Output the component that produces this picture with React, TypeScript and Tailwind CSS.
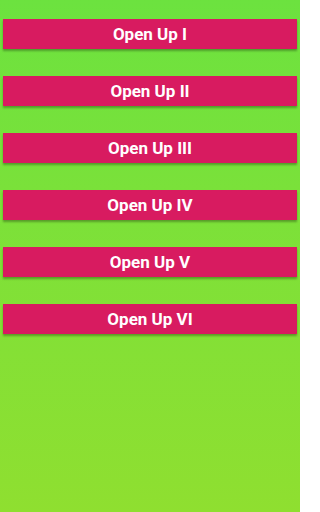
import React from "react";

const labels = ["I", "II", "III", "IV", "V", "VI"];

export default function App() {
  return (
    <div
      className="w-[300px] h-[512px] bg-gradient-to-b from-[#6ce23f] to-[#8fdf30] flex flex-col gap-[27px] pt-[19px] px-[3px]"
      style={{ fontFamily: "Roboto, 'Liberation Sans', sans-serif" }}
    >
      {labels.map((n) => (
        <button
          key={n}
          className="h-[30px] w-full bg-[#d81b60] text-white text-[17px] font-bold flex items-center justify-center pt-[1px] shadow-[0_2px_2px_rgba(0,0,0,0.3)]"
        >
          Open Up {n}
        </button>
      ))}
    </div>
  );
}
